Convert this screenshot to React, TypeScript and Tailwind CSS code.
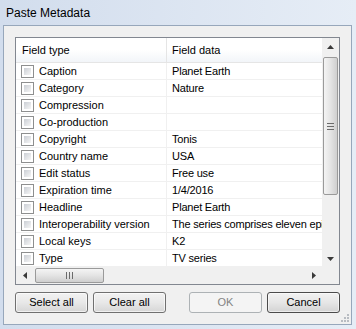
import React from "react";

const rows: [string, string][] = [
  ["Caption", "Planet Earth"],
  ["Category", "Nature"],
  ["Compression", ""],
  ["Co-production", ""],
  ["Copyright", "Tonis"],
  ["Country name", "USA"],
  ["Edit status", "Free use"],
  ["Expiration time", "1/4/2016"],
  ["Headline", "Planet Earth"],
  ["Interoperability version", "The series comprises eleven episodes"],
  ["Local keys", "K2"],
  ["Type", "TV series"],
];

const Checkbox = () => (
  <div className="h-[13px] w-[13px] shrink-0 border border-[#8e8f8f] bg-white p-[2px]">
    <div className="h-full w-full bg-gradient-to-br from-[#cbcfd5] to-[#f6f6f6]" />
  </div>
);

const Arrow = ({ dir }: { dir: "up" | "down" | "left" | "right" }) => {
  const pts = {
    up: "0,4 7,4 3.5,0",
    down: "0,0 7,0 3.5,4",
    left: "4,0 4,7 0,3.5",
    right: "0,0 0,7 4,3.5",
  }[dir];
  const vert = dir === "up" || dir === "down";
  return (
    <svg width={vert ? 7 : 4} height={vert ? 4 : 7} viewBox={vert ? "0 0 7 4" : "0 0 4 7"}>
      <polygon points={pts} fill="#3a3a3a" />
    </svg>
  );
};

const Button = ({ label, disabled, isDefault }: { label: string; disabled?: boolean; isDefault?: boolean }) => (
  <div
    className={
      "flex h-[21px] w-[73px] items-center justify-center rounded-[3px] border text-[11px] " +
      (disabled
        ? "border-[#adb2b5] bg-[#f4f4f4] text-[#838383]"
        : isDefault
          ? "border-[#4b4b4b] bg-gradient-to-b from-[#f2f2f2] via-[#e6e6e6] to-[#d3d3d3] text-black shadow-[inset_0_0_0_1px_#ffffff90]"
          : "border-[#707070] bg-gradient-to-b from-[#f2f2f2] via-[#e8e8e8] to-[#d6d6d6] text-black shadow-[inset_0_0_0_1px_#ffffffa0]")
    }
  >
    {label}
  </div>
);

// little dotted resize grip in the corner
const Grip = () => (
  <svg width="8" height="8" viewBox="0 0 8 8" className="absolute bottom-[2px] right-[2px]">
    {[
      [6, 0],
      [6, 3],
      [3, 3],
      [6, 6],
      [3, 6],
      [0, 6],
    ].map(([x, y]) => (
      <rect key={`${x}-${y}`} x={x} y={y} width="2" height="2" fill="#b8bcc2" />
    ))}
  </svg>
);

export default function App() {
  return (
    <div
      className="flex h-[329px] w-[356px] flex-col bg-gradient-to-r from-[#d2dded] to-[#e6edf6] text-black"
      style={{ fontFamily: '"Liberation Sans", Arial, sans-serif' }}
    >
      {/* title bar */}
      <div className="flex h-[25px] shrink-0 items-center pl-[6px] pt-[1px] text-[12px]">Paste Metadata</div>

      {/* client */}
      <div className="relative mb-[4px] ml-[3px] mr-[4px] flex flex-1 flex-col border border-[#97a7bb] bg-[#f0f0f0] px-[11px] pb-[11px] pt-[11px]">
        {/* list view */}
        <div className="flex h-[248px] border border-[#828790] bg-white text-[11px]">
          <div className="flex w-[306px] flex-col">
            <div className="flex-1 overflow-hidden">
              {/* header */}
              <div className="flex h-[25px] border-b border-[#e5e5e5] bg-gradient-to-b from-white via-white to-[#f2f5f9]">
                <div className="flex w-[151px] shrink-0 items-center border-r border-[#e5e5e5] pl-[6px]">Field type</div>
                <div className="flex items-center pl-[5px]">Field data</div>
              </div>
              {rows.map(([k, v]) => (
                <div key={k} className="flex h-[17px] border-b border-[#f0f0f0]">
                  <div className="flex w-[151px] shrink-0 items-center gap-[5px] border-r border-[#f0f0f0] pl-[5px]">
                    <Checkbox />
                    <span className="whitespace-nowrap">{k}</span>
                  </div>
                  <div className="flex items-center whitespace-nowrap pl-[5px] tracking-[-0.2px]">{v}</div>
                </div>
              ))}
            </div>
            {/* horizontal scrollbar */}
            <div className="flex h-[17px] shrink-0 items-center bg-[#f0f0f0]">
              <div className="flex h-[17px] w-[17px] items-center justify-center">
                <Arrow dir="left" />
              </div>
              <div className="ml-[2px] flex h-[15px] w-[69px] items-center justify-center rounded-[2px] border border-[#9a9a9a] bg-gradient-to-b from-[#f4f4f4] via-[#e4e4e4] to-[#cfcfcf]">
                <svg width="7" height="7" viewBox="0 0 7 7">
                  <path d="M0.5 0v7M3.5 0v7M6.5 0v7" stroke="#6b6b6b" strokeWidth="1" />
                </svg>
              </div>
              <div className="flex-1" />
              <div className="flex h-[17px] w-[17px] items-center justify-center">
                <Arrow dir="right" />
              </div>
            </div>
          </div>
          {/* vertical scrollbar */}
          <div className="flex w-[17px] flex-col bg-[#f0f0f0]">
            <div className="flex h-[17px] shrink-0 items-center justify-center">
              <Arrow dir="up" />
            </div>
            <div className="mx-[1px] mt-[2px] flex h-[138px] items-center justify-center rounded-[2px] border border-[#9a9a9a] bg-gradient-to-r from-[#f4f4f4] via-[#e4e4e4] to-[#cfcfcf]">
              <svg width="7" height="7" viewBox="0 0 7 7">
                <path d="M0 0.5h7M0 3.5h7M0 6.5h7" stroke="#6b6b6b" strokeWidth="1" />
              </svg>
            </div>
            <div className="flex-1" />
            <div className="flex h-[17px] shrink-0 items-center justify-center">
              <Arrow dir="down" />
            </div>
            <div className="h-[17px] shrink-0 bg-[#f0f0f0]" />
          </div>
        </div>

        {/* buttons */}
        <div className="mt-[7px] flex items-center">
          <div className="flex gap-[5px]">
            <Button label="Select all" />
            <Button label="Clear all" />
          </div>
          <div className="flex-1" />
          <div className="flex gap-[5px]">
            <Button label="OK" disabled />
            <Button label="Cancel" isDefault />
          </div>
        </div>
        <Grip />
      </div>
    </div>
  );
}
